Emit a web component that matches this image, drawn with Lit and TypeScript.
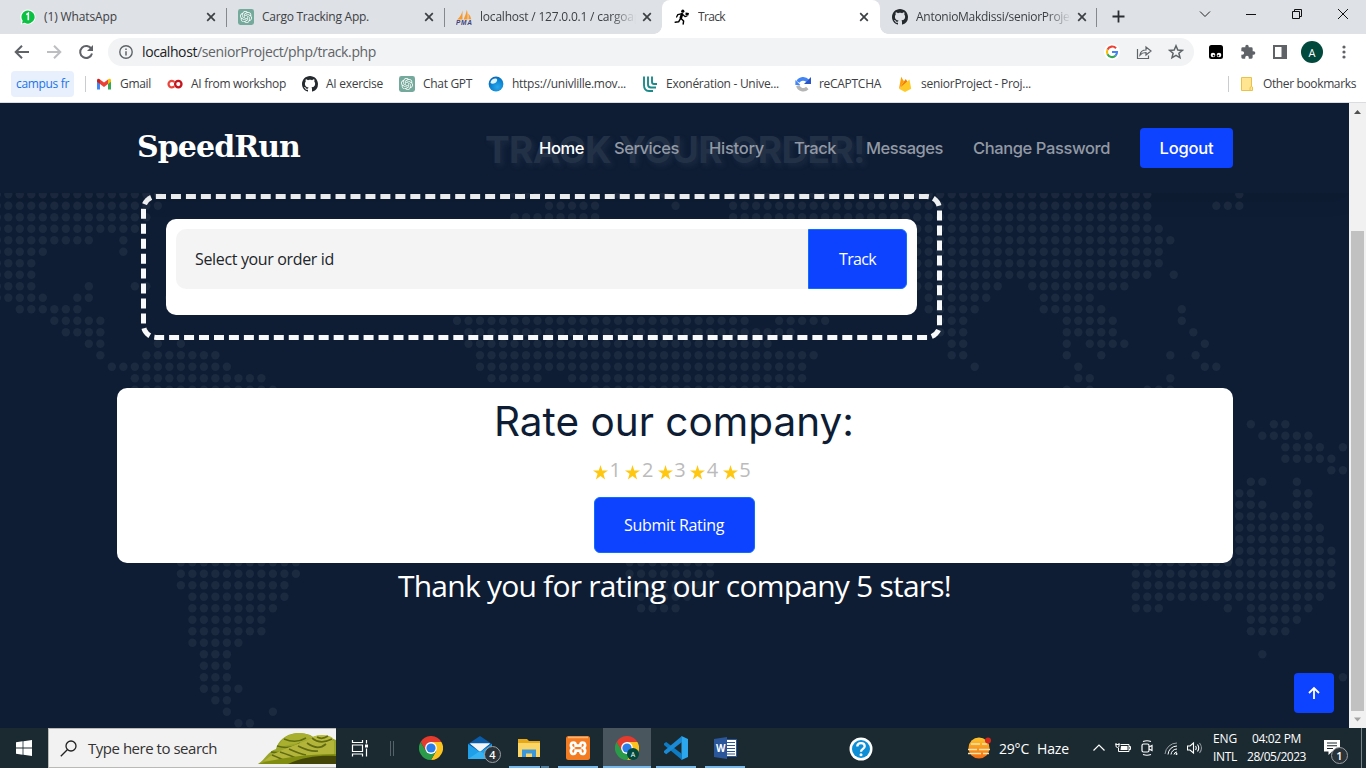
import { LitElement, html, css, svg } from "lit";
import { customElement, property } from "lit/decorators.js";

/* Single line of text tracked out (or in) to an exact width. */
@customElement("fit-text")
class FitText extends LitElement {
  @property({ type: Number }) w = 0;
  @property() text = "";
  static styles = css`
    :host { display: inline-block; white-space: pre; flex: none; }
    .t { display: inline-block; }
  `;
  render() {
    return html`<span class="t">${this.text}</span>`;
  }
  updated() {
    const t = this.renderRoot.querySelector(".t") as HTMLElement;
    t.style.letterSpacing = "0px";
    const natural = t.getBoundingClientRect().width;
    const n = Math.max(1, this.text.length);
    t.style.letterSpacing = `${(this.w - natural) / n}px`;
    this.style.width = `${this.w}px`;
  }
}

const ft = (text: string, w: number) => html`<fit-text .text=${text} .w=${w}></fit-text>`;

const OPENAI =
  "M22.2819 9.8211a5.9847 5.9847 0 0 0-.5157-4.9108 6.0462 6.0462 0 0 0-6.5098-2.9A6.0651 6.0651 0 0 0 4.9807 4.1818a5.9847 5.9847 0 0 0-3.9977 2.9 6.0462 6.0462 0 0 0 .7427 7.0966 5.98 5.98 0 0 0 .511 4.9107 6.051 6.051 0 0 0 6.5146 2.9001A5.9847 5.9847 0 0 0 13.2599 24a6.0557 6.0557 0 0 0 5.7718-4.2058 5.9894 5.9894 0 0 0 3.9977-2.9001 6.0557 6.0557 0 0 0-.7475-7.0729zm-9.022 12.6081a4.4755 4.4755 0 0 1-2.8764-1.0408l.1419-.0804 4.7783-2.7582a.7948.7948 0 0 0 .3927-.6813v-6.7369l2.02 1.1686a.071.071 0 0 1 .038.052v5.5826a4.504 4.504 0 0 1-4.4945 4.4944zm-9.6607-4.1254a4.4708 4.4708 0 0 1-.5346-3.0137l.142.0852 4.783 2.7582a.7712.7712 0 0 0 .7806 0l5.8428-3.3685v2.3324a.0804.0804 0 0 1-.0332.0615L9.74 19.9502a4.4992 4.4992 0 0 1-6.1408-1.6464zM2.3408 7.8956a4.485 4.485 0 0 1 2.3655-1.9728V11.6a.7664.7664 0 0 0 .3879.6765l5.8144 3.3543-2.0201 1.1685a.0757.0757 0 0 1-.071 0l-4.8303-2.7865A4.504 4.504 0 0 1 2.3408 7.872zm16.5963 3.8558L13.1038 8.364 15.1192 7.2a.0757.0757 0 0 1 .071 0l4.8303 2.7913a4.4944 4.4944 0 0 1-.6765 8.1042v-5.6772a.79.79 0 0 0-.407-.667zm2.0107-3.0231l-.142-.0852-4.7735-2.7818a.7759.7759 0 0 0-.7854 0L9.409 9.2297V6.8974a.0662.0662 0 0 1 .0284-.0615l4.8303-2.7866a4.4992 4.4992 0 0 1 6.6802 4.66zM8.3065 12.863l-2.02-1.1638a.0804.0804 0 0 1-.038-.0567V6.0742a4.4992 4.4992 0 0 1 7.3757-3.4537l-.142.0805L8.704 5.459a.7948.7948 0 0 0-.3927.6813zm1.0976-2.3654l2.602-1.4998 2.6069 1.4998v2.9994l-2.5974 1.4997-2.6067-1.4997Z";
const GITHUB =
  "M8 0C3.58 0 0 3.58 0 8c0 3.54 2.29 6.53 5.47 7.59.4.07.55-.17.55-.38 0-.19-.01-.82-.01-1.49-2.01.37-2.53-.49-2.69-.94-.09-.23-.48-.94-.82-1.13-.28-.15-.68-.52-.01-.53.63-.01 1.08.58 1.23.82.72 1.21 1.87.87 2.33.66.07-.52.28-.87.51-1.07-1.78-.2-3.64-.89-3.64-3.95 0-.87.31-1.59.82-2.15-.08-.2-.36-1.02.08-2.12 0 0 .67-.21 2.2.82.64-.18 1.32-.27 2-.27s1.36.09 2 .27c1.53-1.04 2.2-.82 2.2-.82.44 1.1.16 1.92.08 2.12.51.56.82 1.27.82 2.15 0 3.07-1.87 3.75-3.65 3.95.29.25.54.73.54 1.48 0 1.07-.01 1.93-.01 2.2 0 .21.15.46.55.38A8.01 8.01 0 0 0 16 8c0-4.42-3.58-8-8-8z";

const icons = {
  whatsapp: html`<svg width="16" height="16" viewBox="0 0 16 16"><path d="M8 .4A7.5 7.5 0 0 1 8 15.500 7.700 7.700 0 0 1 4.400 14.700L.6 15.600 1.500 12A7.500 7.500 0 0 1 8 .4Z" fill="#fff"/><path d="M8 1.400A6.600 6.600 0 1 1 4.700 13.700L2 14.400 2.700 11.800A6.600 6.600 0 0 1 8 1.400Z" fill="#0bc143"/><path d="M6.300 5.600 8.300 4.300V11.200" fill="none" stroke="#fff" stroke-width="1.600"/></svg>`,
  openai: html`<svg width="16" height="16" viewBox="0 0 16 16"><rect width="16" height="16" rx="2.400" fill="#74a99b"/><g transform="translate(2 2) scale(.5)"><path d=${OPENAI} fill="#fff"/></g></svg>`,
  pma: html`<svg width="16" height="16" viewBox="0 0 16 16"><path d="M6.500 1.200V10.500H1.200C3.800 8.500 6 5 6.500 1.200ZM10.800.8C10.200 4 9 7.500 7.600 10.500H11.500C11.800 7 11.700 3.500 10.800.8ZM12.200 4.500C13.800 6 14.800 8 15.200 10.300H12.400C12.700 8.300 12.600 6.200 12.200 4.500Z" fill="#f79a2b"/><text x="0" y="16" font-family="Liberation Sans" font-weight="700" font-style="italic" font-size="6.500" textLength="16" fill="#40427b">PMA</text></svg>`,
  runner: html`<svg width="16" height="16" viewBox="0 0 16 16" fill="none" stroke="#000" stroke-linecap="round" stroke-linejoin="round"><circle cx="8.800" cy="2.200" r="1.600" fill="#000" stroke="none"/><path d="M8 5.200 6.800 9" stroke-width="2.600"/><path d="M7.200 4.800 3.800 5.600 2.600 8M9.300 6 11 7.600 13 6.800" stroke-width="1.300"/><path d="M7.300 9.800 9.600 12 9.200 15M6.200 10.200 4.600 12.800 1.200 13.200" stroke-width="1.500"/><path d="M11.600 3.400 15 4 14.400 6.400 11.400 5.800Z" fill="#000" stroke="none"/></svg>`,
  github: html`<svg width="16" height="16" viewBox="0 0 16 16"><path d=${GITHUB} fill="#24292e"/></svg>`,
  gmail: html`<svg width="16" height="16" viewBox="0 0 16 16"><path d="M1 4V13.500H4V7.500Z" fill="#4285f4"/><path d="M15 4V13.500H12V7.500Z" fill="#34a853"/><path d="M4 3.500V8L8 11 12 8V3.500L8 6.600Z" fill="#ea4335"/><path d="M1 4.500C1 2.500 2.800 2.200 4 3.500V8L1 5.800Z" fill="#c5221f"/><path d="M15 4.500C15 2.500 13.200 2.200 12 3.500V8L15 5.800Z" fill="#fbbc04"/></svg>`,
  colab: html`<svg width="16" height="16" viewBox="0 0 16 16" fill="none" stroke-width="2.300"><path d="M7.300 5.900A3.300 3.300 0 1 0 7.300 10.300" stroke="#e8453c"/><circle cx="11.300" cy="8.100" r="3.200" stroke="#c4161c"/></svg>`,
  ball: html`<svg width="16" height="16" viewBox="0 0 16 16"><defs><radialGradient id="g" cx=".6" cy=".7" r=".8"><stop offset="0" stop-color="#2aa7ea"/><stop offset=".6" stop-color="#0a80d0"/><stop offset="1" stop-color="#0a5fa8"/></radialGradient></defs><circle cx="8" cy="8" r="7.400" fill="url(#g)"/><path d="M2.500 6.500C3 3.500 6 2.200 8 2.600 9.800 3.200 9.300 5.600 7.600 6.700 5.800 7.800 3 8.300 2.500 6.500Z" fill="#dff3ff"/></svg>`,
  lille: html`<svg width="16" height="16" viewBox="0 0 16 16" fill="none" stroke="#1d8a8a" stroke-width="1.900"><path d="M2 .5V9Q2 15 7 15H11M6 .5V8.500Q6 11.500 9 11.500H14M10 .5V6Q10 8 12 8H15"/></svg>`,
  captcha: html`<svg width="16" height="16" viewBox="0 0 16 16" fill="none"><path d="M3 5.800A6 6 0 0 1 12.600 4.800" stroke="#4285f4" stroke-width="3.600"/><path d="M16 1V8H9Z" fill="#2a56c6"/><path d="M2.800 9.500A5.600 5.600 0 0 0 12.300 12" stroke="#b5b5b5" stroke-width="3.400"/><path d="M.4 4V9H5.400Z" fill="#4285f4"/></svg>`,
  firebase: html`<svg width="16" height="16" viewBox="0 0 16 16"><path d="M2 12.800 4.200.8 7 5.600Z" fill="#ffa000"/><path d="M2 12.800 8.800 3 10.600 6Z" fill="#f57c00"/><path d="M2 12.800 12.500 3.500 14.200 12.800 8 16Z" fill="#ffca28"/></svg>`,
  folder: html`<svg width="14" height="16" viewBox="0 0 14 16"><path d="M1.500 1.500H11.500V10.500L12.500 11V14.500H1.500Z" fill="#ffe592" stroke="#e9c24a"/><path d="M11.500 10.500 10 11.500V14.500" fill="none" stroke="#e9c24a"/></svg>`,
};

const x10 = html`<svg width="16" height="16" viewBox="0 0 16 16"><path d="M4.200 4.200 11.800 11.800M11.800 4.200 4.200 11.800" stroke="#3c4043" stroke-width="1.700"/></svg>`;

const chrome = (s: number) => html`<svg width=${s} height=${s} viewBox="0 0 24 24"><path d="M1.600 6A12 12 0 0 1 22.400 6H12V12L6.800 15Z" fill="#e33b2e"/><path d="M22.400 6A12 12 0 0 1 12 24L17.200 15 12 12V6Z" fill="#fcc31e"/><path d="M12 24A12 12 0 0 1 1.600 6L6.800 15 12 12 17.200 15Z" fill="#2a9c49"/><circle cx="12" cy="12" r="5.900" fill="#fff"/><circle cx="12" cy="12" r="4.600" fill="#2b7de9"/></svg>`;

const TABS = [
  { icon: icons.whatsapp, title: "(1) WhatsApp", w: 73 },
  { icon: icons.openai, title: "Cargo Tracking App.", w: 107 },
  { icon: icons.pma, title: "localhost / 127.0.0.1 / cargoapp", w: 168, fade: true },
  { icon: icons.runner, title: "Track", w: 27, active: true },
  { icon: icons.github, title: "AntonioMakdissi/seniorProject", w: 163, fade: true },
];

const MARKS: [unknown, string, number][] = [
  [icons.gmail, "Gmail", 31],
  [icons.colab, "AI from workshop", 95],
  [icons.github, "AI exercise", 57],
  [icons.openai, "Chat GPT", 49],
  [icons.ball, "https://univlille.mov...", 114],
  [icons.lille, "Exonération - Unive...", 113],
  [icons.captcha, "reCAPTCHA", 62],
  [icons.firebase, "seniorProject - Proj...", 110],
];

/* Dotted world map: row number -> list of column runs. */
const MAP: Record<number, number[][]> = {
  0: [[-1, 13], [44, 46], [53, 53], [55, 55], [57, 57], [63, 99], [107, 107]],
  1: [[-1, 13], [47, 51], [58, 58], [63, 99], [105, 107]],
  2: [[-1, 12], [44, 51], [63, 99]],
  3: [[-1, 11], [78, 100]],
  4: [[-1, 7], [10, 10], [78, 101]],
  5: [[-1, 3], [10, 10], [78, 100]],
  6: [[-1, 2], [78, 100]],
  7: [[-1, 2], [79, 99], [101.3, 101.3]],
  8: [[-1, 2], [7, 7], [11, 12], [79, 86], [89, 97]],
  9: [[-1, 3], [6, 7], [14, 14], [80, 85], [90, 94]],
  10: [[1, 6], [80, 84], [90, 95], [102, 102]],
  11: [[4, 8], [39, 64], [67, 71], [81, 83], [92, 96], [102, 102]],
  12: [[5, 8], [40, 68], [81, 83], [92, 96], [103, 103]],
  13: [[7, 8], [13, 13], [15, 15], [40, 66], [82, 83], [92, 92], [94, 97], [104, 104]],
  14: [[8, 8], [12, 18], [41, 70], [82, 83], [92, 92], [95, 95], [101, 101], [103.2, 103.2]],
  15: [[9, 19], [41, 69], [84, 84], [93, 93], [104, 105]],
  16: [[11, 22], [42, 46], [49, 69], [93, 94], [101, 101]],
  17: [[11, 23], [51, 68], [92, 92], [94, 94], [99, 101]],
  20: [[108, 108], [110, 111]],
  21: [[109, 113]],
  22: [[111, 114], [116, 116]],
  23: [[111, 115]],
  24: [[115, 116]],
  25: [[108, 109], [112, 112]],
  26: [[107, 108], [112, 113]],
  27: [[107, 109], [112, 113]],
  28: [[107, 113]],
  29: [[107, 114]],
  30: [[107, 114]],
  31: [[107, 115]],
  32: [[15, 25], [54, 61], [98, 115]],
  33: [[15, 25], [54, 61], [98, 115]],
  34: [[15, 24], [55, 60], [98, 115]],
  35: [[16, 24], [55, 59], [98, 114]],
  36: [[16, 23], [55, 58], [98, 100], [106, 106], [108, 113]],
  37: [[16, 22], [108, 112]],
  38: [[16, 22], [108, 111]],
  39: [[16, 20]],
  40: [[17, 19], [109, 109]],
  41: [[17, 19]],
  42: [[17, 19], [116, 116]],
  43: [[17, 20]],
  44: [[18, 19]],
  45: [[19, 19], [23, 23]],
  46: [[20, 21]],
};

@customElement("dot-map")
class DotMap extends LitElement {
  static styles = css`
    :host { display: block; }
    svg { display: block; }
    .dot { fill: #1c2a40; }
  `;
  render() {
    const dots: unknown[] = [];
    for (const [row, runs] of Object.entries(MAP))
      for (const [a, b] of runs)
        for (let c = a; c <= b; c++)
          dots.push(svg`<circle class="dot" cx=${8.3 + c * 11.505} cy=${91.2 + Number(row) * 11.5} r="4.2"/>`);
    return html`<svg width="1349" height="625" viewBox="0 0 1349 625">${dots}</svg>`;
  }
}

@customElement("browser-chrome")
class BrowserChrome extends LitElement {
  static styles = css`
    :host { display: block; height: 103px; background: #fff; color: #3c4043; font-family: "Open Sans", "Noto Sans", sans-serif; font-size: 12px; }
    svg { display: block; flex: none; }
    .strip { height: 34px; background: #dee1e6; display: flex; padding-left: 8px; }
    .tab { width: 218px; height: 34px; box-sizing: border-box; display: flex; align-items: center; padding: 0 7px 0 12px; position: relative; }
    .tab.sep::after { content: ""; position: absolute; right: -1px; top: 8px; width: 1px; height: 19px; background: #85888d; }
    .tab.last::after { right: 1px; }
    .tab.active { background: #fff; border-radius: 8px 8px 0 0; }
    .tab.active::before, .tab.active::after { content: ""; position: absolute; bottom: 0; width: 8px; height: 8px; }
    .tab.active::before { left: -8px; background: radial-gradient(circle at 0 0, transparent 7.500px, #fff 8px); }
    .tab.active::after { right: -8px; background: radial-gradient(circle at 100% 0, transparent 7.500px, #fff 8px); }
    .tab.active, .tab.last { padding-right: 8px; }
    .title { flex: 1; margin: 0 2px 0 8px; overflow: hidden; white-space: nowrap; line-height: 18px; }
    .title.fade { -webkit-mask-image: linear-gradient(90deg, #000 84%, transparent 100%); margin-right: 3px; }
    .plus { margin: 8px 0 0 12px; }
    .win { display: flex; margin-left: 70px; gap: 30px; padding-top: 6px; }
    .bar { height: 36px; display: flex; align-items: center; padding-left: 14px; }
    .nav { display: flex; gap: 16px; }
    .omni { margin-left: 14px; width: 1086px; height: 28px; box-sizing: border-box; border-radius: 14px; background: #f1f3f4; display: flex; align-items: center; padding: 0 10px; font-size: 14px; line-height: 20px; }
    .omni fit-text { display: block; margin-top: -1px; }
    .info { margin-right: 8px; }
    .host { color: #202124; }
    .path { color: #5f6368; }
    .acts { display: flex; gap: 16px; margin-left: auto; }
    .ext { display: flex; gap: 8px; margin-left: 10px; }
    .cell { width: 24px; height: 24px; display: flex; align-items: center; justify-content: center; }
    .ava { width: 22px; height: 22px; border-radius: 50%; background: #00493c; color: #fff; font-size: 11px; display: flex; align-items: center; justify-content: center; }
    .marks { height: 28px; display: flex; align-items: center; padding-left: 11px; line-height: 18px; }
    .chip { background: #e8f0fe; color: #1a73e8; height: 26px; width: 63px; border-radius: 4px; display: flex; align-items: center; justify-content: center; }
    .vsep { width: 1px; height: 16px; background: #c9ccd0; margin-left: 11px; }
    .list { display: flex; gap: 16px; margin-left: 10px; }
    .mark { display: flex; gap: 8px; align-items: center; }
    .other { display: flex; align-items: center; margin-left: auto; padding-right: 10px; }
    .other svg { margin: 0 9px 0 11px; }
    .edge { height: 1px; background: #dadce0; margin-top: 4px; }
  `;
  render() {
    return html`
      <div class="strip">
        ${TABS.map(
          (t, i) => html`<div class="tab ${t.active ? "active" : ""} ${i !== 2 && i !== 3 ? "sep" : ""} ${i === 4 ? "last" : ""}">
            ${t.icon}
            <div class="title ${t.fade ? "fade" : ""}">${ft(t.title, t.w)}</div>
            ${x10}
          </div>`
        )}
        <svg class="plus" width="17" height="17" viewBox="0 0 17 17"><path d="M8.500 2.500V14.500M2.500 8.500H14.500" stroke="#2b2e31" stroke-width="1.800"/></svg>
        <div class="win">
          <svg width="16" height="16" viewBox="0 0 16 16"><path d="M3 5.500 8 10.500 13 5.500" fill="none" stroke="#222"/></svg>
          <svg width="16" height="16" viewBox="0 0 16 16"><path d="M3 8.500H13" stroke="#111"/></svg>
          <svg width="16" height="16" viewBox="0 0 16 16"><path d="M3.500 5.500H10.500V12.500H3.500ZM5.500 5.500V3.500H12.500V10.500H10.500" fill="none" stroke="#111"/></svg>
          <svg width="16" height="16" viewBox="0 0 16 16"><path d="M3 3 13 13M13 3 3 13" stroke="#111"/></svg>
        </div>
      </div>
      <div class="bar">
        <div class="nav">
          <svg width="16" height="16" viewBox="0 0 16 16"><path d="M15 8H2M8 1.700 1.700 8 8 14.300" fill="none" stroke="#5f6368" stroke-width="2"/></svg>
          <svg width="16" height="16" viewBox="0 0 16 16"><path d="M1 8H14M8 1.700 14.300 8 8 14.300" fill="none" stroke="#bcbec1" stroke-width="2"/></svg>
          <svg width="16" height="16" viewBox="0 0 16 16"><path d="M13.400 5A6 6 0 1 0 14 9.500" fill="none" stroke="#5f6368" stroke-width="2"/><path d="M15 1V7H9Z" fill="#5f6368"/></svg>
        </div>
        <div class="omni">
          <svg class="info" width="16" height="16" viewBox="0 0 16 16"><circle cx="8" cy="8" r="6.200" fill="none" stroke="#5f6368" stroke-width="1.400"/><path d="M8 7.200V11.400M8 4.500V6" stroke="#5f6368" stroke-width="1.500"/></svg>
          <span class="host">${ft("localhost", 55)}</span><span class="path">${ft("/seniorProject/php/track.php", 179)}</span>
          <div class="acts">
            <svg width="16" height="16" viewBox="0 0 16 16"><circle cx="8" cy="8" r="8" fill="#fff"/><g fill="none" stroke-width="2.100"><path d="M12 4.200A5.100 5.100 0 0 0 3.500 5.700" stroke="#ea4335"/><path d="M3.500 5.700A5.100 5.100 0 0 0 3.500 10.300" stroke="#fbbc04"/><path d="M3.500 10.300A5.100 5.100 0 0 0 11.500 11.700" stroke="#34a853"/><path d="M11.500 11.700A5 5 0 0 0 13 8H8" stroke="#4285f4"/></g></svg>
            <svg width="16" height="16" viewBox="0 0 16 16" fill="none" stroke="#5f6368" stroke-width="1.200"><path d="M1.500 5V14.500H12.500V11.500M4 11C4.500 7.500 7 6 10 6V3L15 7 10 11V8.500C7.500 8.500 5.500 9.200 4 11Z"/></svg>
            <svg width="16" height="16" viewBox="0 0 16 16"><path d="M8 1.800 9.800 6 14.300 6.400 10.900 9.300 12 13.800 8 11.400 4 13.800 5.100 9.300 1.700 6.400 6.200 6Z" fill="none" stroke="#5f6368" stroke-width="1.500"/></svg>
          </div>
        </div>
        <div class="ext">
          <div class="cell"><svg width="16" height="16" viewBox="0 0 16 16"><rect x="1" y="1" width="14" height="14" rx="2.500" fill="#000"/><circle cx="5" cy="11" r="2.300" fill="#fff"/><circle cx="11" cy="11" r="2.300" fill="#fff"/><circle cx="5.600" cy="11.600" r=".9"/><circle cx="10.400" cy="11.600" r=".9"/></svg></div>
          <div class="cell"><svg width="16" height="16" viewBox="0 0 24 24"><path d="M20.500 11H19V7a2 2 0 0 0-2-2h-4V3.500a2.500 2.500 0 0 0-5 0V5H4a2 2 0 0 0-2 2v3.800h1.500a2.700 2.700 0 0 1 0 5.400H2V20a2 2 0 0 0 2 2h3.800v-1.500a2.700 2.700 0 0 1 5.400 0V22H17a2 2 0 0 0 2-2v-4h1.500a2.500 2.500 0 0 0 0-5z" fill="#5f6368"/></svg></div>
          <div class="cell"><svg width="16" height="16" viewBox="0 0 16 16"><path d="M2 2H14V14H2Z" fill="none" stroke="#5f6368" stroke-width="2"/><path d="M9.500 2H14V14H9.500Z" fill="#5f6368"/></svg></div>
          <div class="cell"><div class="ava">A</div></div>
          <div class="cell"><svg width="16" height="16" viewBox="0 0 16 16" fill="#5f6368"><circle cx="8" cy="3" r="1.600"/><circle cx="8" cy="8" r="1.600"/><circle cx="8" cy="13" r="1.600"/></svg></div>
        </div>
      </div>
      <div class="marks">
        <div class="chip">${ft("campus fr", 53)}</div>
        <div class="vsep"></div>
        <div class="list">
          ${MARKS.map(([icon, name, w]) => html`<div class="mark">${icon}${ft(name, w)}</div>`)}
        </div>
        <div class="other"><div class="vsep"></div>${icons.folder}${ft("Other bookmarks", 93)}</div>
      </div>
      <div class="edge"></div>
    `;
  }
}

@customElement("track-page")
class TrackPage extends LitElement {
  static styles = css`
    :host { display: flex; height: 625px; font-family: "Open Sans", "Noto Sans", sans-serif; }
    svg { display: block; }
    .page { width: 1349px; height: 625px; background: #0e1d34; position: relative; overflow: hidden; }
    dot-map { position: absolute; inset: 0; }
    .content { position: relative; }
    .head { height: 90px; box-sizing: border-box; padding: 0 116px 0 137px; display: flex; align-items: center; position: relative; z-index: 1; box-shadow: 0 5px 20px rgba(0, 0, 0, 0.1); background: #0e1d34; font: 500 16.500px/24px Inter, sans-serif; color: #9299a4; }
    .logo { font: 700 30px/40px "DejaVu Serif", serif; color: #fff; padding-bottom: 2px; }
    .ghost { position: absolute; left: 485px; top: 25px; font: 700 37px/44px Inter, sans-serif; color: #233147; text-shadow: 3px 3px 5px rgba(60, 76, 100, 0.25); margin: 0; }
    .links { display: flex; align-items: center; margin-left: auto; position: relative; }
    .links fit-text { margin-right: 30px; }
    .on { color: #fff; display: flex; }
    .logout { display: flex; align-items: center; justify-content: center; width: 93px; height: 40px; border-radius: 4px; background: #0d42ff; color: #fff; }
    .logout fit-text { margin: 0; }
    .frame { margin: 1px 0 0 141px; width: 801px; height: 146px; box-sizing: border-box; border: 5px dashed #f8f9fa; border-radius: 15px; padding: 20px; }
    .form { height: 96px; box-sizing: border-box; padding: 10px; background: #fff; border-radius: 10px; display: flex; }
    .field { flex: 1; height: 60px; background: #f4f4f4; border-radius: 10px 0 0 10px; box-sizing: border-box; padding-left: 19px; display: flex; align-items: center; color: #212529; font-size: 16px; }
    .btn { background: #0d42ff; border: 1px solid #0d6efd; box-sizing: border-box; color: #fff; font-size: 16px; display: flex; align-items: center; justify-content: center; }
    .track { width: 99px; height: 60px; border-radius: 0 6px 6px 0; }
    .card { margin: 48px 116px 0 117px; height: 175px; box-sizing: border-box; background: #fff; border-radius: 10px; padding: 10px 2px 0 0; display: flex; flex-direction: column; align-items: center; }
    .rate { margin: 0; font: 400 40.500px/48px Inter, sans-serif; color: #0e1d34; height: 48px; }
    .stars { display: flex; height: 28px; width: 162px; margin-top: 10px; font-size: 20px; line-height: 28px; color: #bbb; }
    .star { width: 32.500px; display: flex; gap: 1.500px; }
    .star svg { margin-top: 9px; }
    .submit { width: 161px; height: 56px; border-radius: 6px; margin-top: 13px; }
    .thanks { text-align: center; color: #fff; font-size: 30px; line-height: 45px; }
    .up { position: absolute; right: 15px; bottom: 15px; width: 40px; height: 40px; border-radius: 4px; background: #0d42ff; display: flex; align-items: center; justify-content: center; }
    .scroll { width: 17px; background: #f1f1f1; display: flex; flex-direction: column; align-items: center; justify-content: space-between; }
    .thumb { width: 13px; height: 480px; background: #c1c1c1; margin: 111px 0 auto; }
  `;
  render() {
    return html`
      <div class="page">
        <dot-map></dot-map>
        <div class="content">
          <div class="head">
            <h2 class="ghost">${ft("TRACK YOUR ORDER!", 380)}</h2>
            <div class="logo">${ft("SpeedRun", 163)}</div>
            <div class="links">
              <span class="on">${ft("Home", 45)}</span>
              ${ft("Services", 65)}${ft("History", 55)}${ft("Track", 42)}${ft("Messages", 77)}${ft("Change Password", 137)}
              <div class="logout">${ft("Logout", 54)}</div>
            </div>
          </div>
          <div class="frame">
            <div class="form">
              <div class="field">${ft("Select your order id", 139)}</div>
              <div class="btn track">${ft("Track", 37)}</div>
            </div>
          </div>
          <div class="card">
            <h1 class="rate">${ft("Rate our company:", 360)}</h1>
            <div class="stars">
              ${[1, 2, 3, 4, 5].map(
                (n) => html`<div class="star"><svg width="15" height="15" viewBox="0 0 15 15"><path d="M7.500 0 9.200 5.400H15L10.400 8.800 12.100 14.400 7.500 11 2.900 14.400 4.600 8.800 0 5.400H5.800Z" fill="#ffc70f"/></svg>${n}</div>`
              )}
            </div>
            <div class="btn submit">${ft("Submit Rating", 100)}</div>
          </div>
          <div class="thanks">${ft("Thank you for rating our company 5 stars!", 553)}</div>
        </div>
        <div class="up"><svg width="14" height="14" viewBox="0 0 14 14"><path d="M7 13V2M2 7 7 2 12 7" fill="none" stroke="#fff" stroke-width="1.800"/></svg></div>
      </div>
      <div class="scroll">
        <svg width="17" height="17" viewBox="0 0 17 17"><path d="M5 11H12L8.500 7Z" fill="#505050"/></svg>
        <div class="thumb"></div>
        <svg width="17" height="17" viewBox="0 0 17 17"><path d="M5 6.500H12L8.500 10.500Z" fill="#a3a3a3"/></svg>
      </div>
    `;
  }
}

@customElement("task-bar")
class TaskBar extends LitElement {
  static styles = css`
    :host { display: flex; height: 40px; background: #1b2a31; color: #fff; font-family: "Open Sans", "Noto Sans", sans-serif; font-size: 12px; }
    svg { display: block; flex: none; }
    .start { width: 48px; display: flex; align-items: center; justify-content: center; }
    .search { width: 288px; box-sizing: border-box; background: #f2f2f2; border: 1px solid #b9b9b5; border-right: 0; display: flex; align-items: center; padding-left: 11px; color: #333; font-size: 15px; }
    .search fit-text { margin-left: 11px; }
    .art { margin-left: auto; }
    .tv { width: 48px; display: flex; align-items: center; justify-content: center; }
    .bars { width: 2px; height: 15px; border: solid #56626a; border-width: 0 1px; margin: 13px 13px 0 6px; }
    .apps { display: flex; gap: 1px; }
    .app { width: 48px; height: 40px; display: flex; align-items: center; justify-content: center; position: relative; }
    .app.run::after { content: ""; position: absolute; left: 4px; right: 4px; bottom: 0; height: 2px; background: #76b9ed; }
    .app.active { background: #49565d; }
    .app.active::after { left: 0; right: 0; }
    .app.multi::after { background: linear-gradient(90deg, #76b9ed 31px, #1b2a31 31px, #1b2a31 32px, #5082a8 32px); }
    .badge { position: absolute; left: 28px; top: 18px; width: 17px; height: 17px; box-sizing: border-box; border-radius: 50%; background: #2a3339; border: 1px solid #9aa0a4; font-size: 11px; font-weight: 600; display: flex; align-items: center; justify-content: center; }
    .mini { position: absolute; left: 24px; top: 20px; width: 12px; height: 12px; border-radius: 50%; background: #00493c; font-size: 7px; display: flex; align-items: center; justify-content: center; }
    .help { margin: 8px 0 0 99px; }
    .tray { margin-left: auto; display: flex; align-items: center; }
    .wx { display: flex; align-items: center; font-size: 14px; }
    .wx fit-text { margin-left: 8px; }
    .sys { display: flex; gap: 8px; margin-left: 22px; }
    .two { display: flex; flex-direction: column; line-height: 18px; gap: 0; align-items: center; margin-left: 10px; }
    .note { position: relative; width: 24px; height: 40px; margin-left: 18px; }
    .note svg { margin-top: 12px; }
    .note .badge { left: 7px; top: 19px; }
    .desk { width: 1px; height: 40px; background: #7b8489; margin: 0 4px 0 13px; }
  `;
  render() {
    return html`
      <div class="start"><svg width="16" height="16" viewBox="0 0 16 16" fill="#fff"><path d="M0 2.200 6.600 1.300V7.600H0ZM7.400 1.200 16 0V7.600H7.400ZM0 8.400H6.600V14.700L0 13.800ZM7.400 8.400H16V16L7.400 14.800Z"/></svg></div>
      <div class="search">
        <svg width="17" height="17" viewBox="0 0 17 17" fill="none" stroke="#222" stroke-width="1.300"><circle cx="11" cy="6" r="5"/><path d="M7.300 9.700.8 16.200"/></svg>
        ${ft("Type here to search", 129)}
        <svg class="art" width="78" height="32" viewBox="0 0 78 32">
          <path d="M0 32C8 27 9 20 18 17 20 9 27 2 39 1 46 1 52 2 55 5 62 2 72 5 78 8V32Z" fill="#99a52b"/>
          <path d="M20 16C22 8 29 2 40 1 47 1 51 3 55 5 44 12 30 12 20 16Z" fill="#a9b02f"/>
          <path d="M26 7Q38 12 48 6M19 14Q32 18 42 11M13 20Q26 22 34 16" fill="none" stroke="#5f6c12" stroke-width="1.500"/>
          <path d="M6 29C20 17 40 13 54 6L76 9V24Z" fill="#b3b53a"/>
          <ellipse cx="64" cy="7" rx="11" ry="4" fill="#babc3c"/>
          <path d="M54 6Q62 13 74 7M59 5Q64 8 70 4M49 11Q60 19 68 12M40 14Q52 20 60 19M31 17Q42 22 48 23M22 20Q34 24 38 26M14 23Q24 27 27 29" fill="none" stroke="#626b14" stroke-width="1.700"/>
          <path d="M0 32C20 26 50 22 78 22V32Z" fill="#7f8c10"/>
          <path d="M30 32C44 25 62 23 78 24V32Z" fill="#444607"/>
        </svg>
      </div>
      <div class="tv"><svg width="18" height="18" viewBox="0 0 18 18" fill="none" stroke="#fff" stroke-width="1.200"><path d="M1.500 6H11.500V12.500H1.500ZM1.500 1V3.500H11.500V1M1.500 17.500V15H11.500V17.500M15.500 1V4.500M15.500 9.500V17.500"/><path d="M14 5.500H17V8.500H14Z" fill="#fff" stroke="none"/></svg></div>
      <div class="bars"></div>
      <div class="apps">
        <div class="app">${chrome(24)}</div>
        <div class="app"><svg width="24" height="24" viewBox="0 0 24 24"><path d="M0 8 12 0 24 8V15H0Z" fill="#0a5ba8"/><path d="M2 7.500H22L12 16Z" fill="#f3f6f8"/><path d="M0 8 12 16 24 8V23H0Z" fill="#1e9fe8"/><path d="M0 23 12 15 24 23Z" fill="#36b2f3"/><path d="M2 7.500H22L12 14.500Z" fill="#f3f6f8"/></svg><div class="badge">4</div></div>
        <div class="app run multi"><svg width="22" height="20" viewBox="0 0 22 20"><path d="M0 1H9L11 3H22V19H0Z" fill="#e8a918"/><path d="M0 5H22V19H0Z" fill="#fbd667"/><path d="M4 11.500H18V19H14V15.500H8V19H4Z" fill="#3c97d8"/></svg></div>
        <div class="app run"><svg width="24" height="24" viewBox="0 0 24 24"><rect width="24" height="24" rx="2.500" fill="#f37b21"/><path d="M2 1.500H22" stroke="#fab77d" stroke-width="1.500"/><path d="M7.500 6.500C4.500 6.500 3.800 10.500 6.800 12 3.800 13.500 4.500 18 7.500 18 9.200 18 9.700 16.500 9.700 14.600H14.300C14.300 16.500 14.800 18 16.500 18 19.500 18 20.200 13.500 17.200 12 20.200 10.500 19.500 6.500 16.500 6.500 14.800 6.500 14.300 8 14.300 9.600H9.700C9.700 8 9.200 6.500 7.500 6.500Z" fill="none" stroke="#fff" stroke-width="2.700"/></svg></div>
        <div class="app run active">${chrome(24)}<div class="mini">A</div></div>
        <div class="app run"><svg width="24" height="24" viewBox="0 0 24 24"><path d="M17.500 0 24 3V21L17.500 24Z" fill="#2ca6ec"/><path d="M0 7.500 2.200 6 18 18V24L0 9Z" fill="#0d7cc4"/><path d="M0 16.500 2.200 18.200 18 6V0L0 15Z" fill="#1a8ad6"/></svg></div>
        <div class="app run"><svg width="23" height="22" viewBox="0 0 23 22"><path d="M12 2.500H22.500V19.500H12Z" fill="#fff" stroke="#2b579a"/><path d="M13 5.500H21M13 8.500H21M13 11.500H21M13 14.500H21M13 17H21" stroke="#2b579a"/><path d="M0 2 13 0V22L0 20Z" fill="#2b579a"/><text x="2" y="15" font-family="Open Sans" font-weight="700" font-size="10.500" textLength="9.500" lengthAdjust="spacingAndGlyphs" fill="#fff">W</text></svg></div>
      </div>
      <svg class="help" width="26" height="26" viewBox="0 0 26 26"><circle cx="13" cy="13" r="11.500" fill="#fff"/><circle cx="13" cy="13" r="9" fill="#0c8fd6"/><path d="M9.300 10.500C9.300 5.800 16.700 6 16.700 10.300 16.700 13 13 12.800 13 15.800" fill="none" stroke="#fff" stroke-width="2.300"/><circle cx="13" cy="18.800" r="1.500" fill="#fff"/></svg>
      <div class="tray">
        <div class="wx">
          <svg width="24" height="22" viewBox="0 0 24 22"><defs><linearGradient id="s" x2="0" y2="1"><stop offset="0" stop-color="#fdc52e"/><stop offset="1" stop-color="#f36d12"/></linearGradient></defs><circle cx="12" cy="11" r="10.500" fill="url(#s)"/><path d="M4 7H13M15 7H20M1 12.500H10M12 12.500H23M1 16.500H14M16 16.500H22" stroke="#fbe3ae" stroke-width="1.600"/><circle cx="21" cy="3.500" r="3" fill="#d4281c"/></svg>
          ${ft("29°C", 30)}${ft("Haze", 32)}
        </div>
        <div class="sys">
          <svg width="16" height="16" viewBox="0 0 16 16"><path d="M2.500 10.500 8 5 13.500 10.500" fill="none" stroke="#fff" stroke-width="1.200"/></svg>
          <svg width="16" height="16" viewBox="0 0 16 16"><path d="M5.500 4.500H14V11.500H3.500V8M14 6.500H15.500V9.500H14M1 3V6Q1 7.500 2.500 7.500T4 6V3M.5 4.500H4.500" fill="none" stroke="#fff"/><path d="M6 6H12.500V10H5.500Z" fill="#fff"/></svg>
          <svg width="16" height="16" viewBox="0 0 16 16" fill="none" stroke="#fff" stroke-width="1.200"><rect x="3" y="4" width="7" height="8" rx="1.500"/><path d="M10 7 13 5.500V10.500L10 9M4 1.500Q8 0 12 1.500M4 14.500Q8 16 12 14.500"/></svg>
          <svg width="16" height="16" viewBox="0 0 16 16" fill="none" stroke="#fff"><path d="M2 14A12 12 0 0 1 14 3" stroke="#9aa2a6"/><path d="M5 14.500A9 9 0 0 1 14 6M8 14.500A6 6 0 0 1 14 9M11 14.500A3 3 0 0 1 14 12"/><circle cx="13.500" cy="14" r="1" fill="#fff" stroke="none"/></svg>
          <svg width="16" height="16" viewBox="0 0 16 16" fill="none" stroke="#fff" stroke-width="1.100"><path d="M.5 6H3L6.500 3V13L3 10H.5ZM8.500 6Q10 8 8.500 10M10.500 4.500Q13 8 10.500 11.500"/><path d="M12.500 3Q16.500 8 12.500 13" stroke="#8d969b"/></svg>
        </div>
        <div class="two">${ft("ENG", 24)}${ft("INTL", 24)}</div>
        <div class="two">${ft("04:02 PM", 49)}${ft("28/05/2023", 59)}</div>
        <div class="note"><svg width="16" height="15" viewBox="0 0 16 15"><path d="M0 0H16V11.500H8L4.500 15V11.500H0Z" fill="#fff"/><path d="M3 3H13M3 5.800H13M3 8.500H9" stroke="#1b2a31" stroke-width="1.100"/></svg><div class="badge">1</div></div>
        <div class="desk"></div>
      </div>
    `;
  }
}

@customElement("app-root")
class AppRoot extends LitElement {
  static styles = css`
    :host { display: block; width: 1366px; height: 768px; overflow: hidden; }
  `;
  render() {
    return html`<browser-chrome></browser-chrome><track-page></track-page><task-bar></task-bar>`;
  }
}
